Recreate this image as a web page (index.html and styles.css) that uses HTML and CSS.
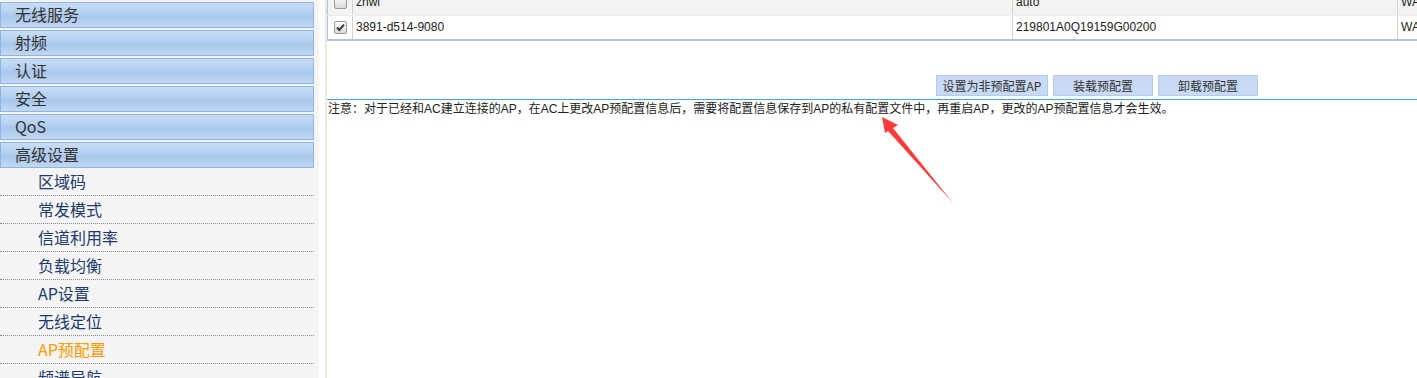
FILE: index.html
```html
<!DOCTYPE html>
<html lang="zh-CN">

<head>
    <meta charset="UTF-8">
    <title>AP预配置</title>
    <link rel="stylesheet" href="styles.css">
</head>

<body>

    <!-- Left menu -->
    <div class="sidebar">
        <div class="menu-head">无线服务</div>
        <div class="menu-head">射频</div>
        <div class="menu-head">认证</div>
        <div class="menu-head">安全</div>
        <div class="menu-head">QoS</div>
        <div class="menu-head last">高级设置</div>
        <ul class="submenu">
            <li>区域码</li>
            <li>常发模式</li>
            <li>信道利用率</li>
            <li>负载均衡</li>
            <li>AP设置</li>
            <li>无线定位</li>
            <li class="active">AP预配置</li>
            <li>频谱导航</li>
        </ul>
    </div>

    <div class="spacer"></div>

    <!-- Main content -->
    <div class="main">
        <table class="ap-table">
            <tr class="row-top">
                <td class="col-check"><span class="checkbox"></span></td>
                <td class="col-name">zhwl</td>
                <td class="col-sn">auto</td>
                <td class="col-more">WA</td>
            </tr>
            <tr>
                <td class="col-check">
                    <span class="checkbox">
                        <svg width="11" height="11" viewBox="0 0 11 11"><path d="M2 5.5 L4.3 8 L9 2.6" fill="none" stroke="#3a3a3a" stroke-width="2"/></svg>
                    </span>
                </td>
                <td class="col-name">3891-d514-9080</td>
                <td class="col-sn">219801A0Q19159G00200</td>
                <td class="col-more">WA</td>
            </tr>
        </table>

        <div class="button-bar">
            <button class="btn btn-wide">设置为非预配置AP</button>
            <button class="btn">装载预配置</button>
            <button class="btn">卸载预配置</button>
        </div>

        <p class="note">注意：对于已经和AC建立连接的AP，在AC上更改AP预配置信息后，需要将配置信息保存到AP的私有配置文件中，再重启AP，更改的AP预配置信息才会生效。</p>
    </div>

    <!-- Red annotation arrow -->
    <svg class="arrow" width="1417" height="378" viewBox="0 0 1417 378">
        <polygon points="882,117 898,125 893,128 953,203 888,131 885,133" fill="#ff3b3b"/>
    </svg>

</body>

</html>
```

FILE: styles.css
```css
/* Basic Reset */
* {
    margin: 0;
    padding: 0;
    box-sizing: border-box;
}

body {
    display: flex;
    height: 100vh;
    overflow: hidden;
    background-color: #fff;
    font-family: "Liberation Sans", "Noto Sans CJK SC", sans-serif;
    color: #333;
}

/* Left menu */
.sidebar {
    width: 319px;
    flex-shrink: 0;
    background-color: #f4f4f4;
    padding-top: 2px;
}

.menu-head {
    width: 314px;
    height: 26px;
    margin-bottom: 2px;
    padding-left: 14px;
    border: 1px solid #8fb5e2;
    background: linear-gradient(#c9def6, #b5d0f0 40%, #a8c7ec 55%, #c2d8f3);
    font-family: "Noto Sans CJK SC", sans-serif;
    font-size: 16px;
    line-height: 23px;
    color: #333;
}

.menu-head.last {
    margin-bottom: 0;
}

.submenu {
    width: 314px;
    list-style: none;
}

.submenu li {
    height: 28px;
    padding-left: 38px;
    border-bottom: 1px dotted #8a8a8a;
    font-family: "Noto Sans CJK SC", sans-serif;
    font-size: 16px;
    line-height: 27px;
    color: #1d3b6c;
}

.submenu li.active {
    color: #ff9900;
}

.spacer {
    width: 6px;
    flex-shrink: 0;
}

/* Main area */
.main {
    flex: 1;
    min-width: 0;
    overflow: hidden;
    border-left: 2px solid #ece8dc;
}

.ap-table {
    width: 1200px;
    margin-top: -10px;
    border-collapse: collapse;
    border-left: 1px solid #a9c8ec;
    border-bottom: 2px solid #a9c8ec;
    font-size: 12px;
}

.ap-table td {
    height: 25px;
    padding-left: 3px;
    border-right: 1px solid #d4d4d4;
    border-bottom: 1px solid #ececec;
    color: #222;
}

.row-top td {
    background-color: #f3f3f3;
}

.col-check {
    width: 25px;
}

.col-name {
    width: 660px;
}

.col-sn {
    width: 385px;
}

.checkbox {
    display: block;
    width: 13px;
    height: 13px;
    margin-left: 3px;
    border: 1px solid #9a9a9a;
    border-radius: 2px;
    background: linear-gradient(#fdfdfd, #d9d9d9);
}

.checkbox svg {
    display: block;
}

/* Buttons */
.button-bar {
    display: flex;
    gap: 5px;
    padding: 34px 0 3px 609px;
    border-bottom: 1px solid #4ba2de;
}

.btn {
    width: 100px;
    height: 21px;
    border: 1px solid #b4cbe9;
    background-color: #c8daf3;
    font-family: "Noto Sans CJK SC", sans-serif;
    font-size: 12px;
    color: #333;
}

.btn-wide {
    width: 112px;
}

.note {
    padding-left: 1px;
    font-family: "Liberation Sans", "Noto Sans CJK SC", sans-serif;
    font-size: 12px;
    line-height: 18px;
    color: #222;
}

/* Annotation overlay */
.arrow {
    position: absolute;
    top: 0;
    left: 0;
    pointer-events: none;
}
```
